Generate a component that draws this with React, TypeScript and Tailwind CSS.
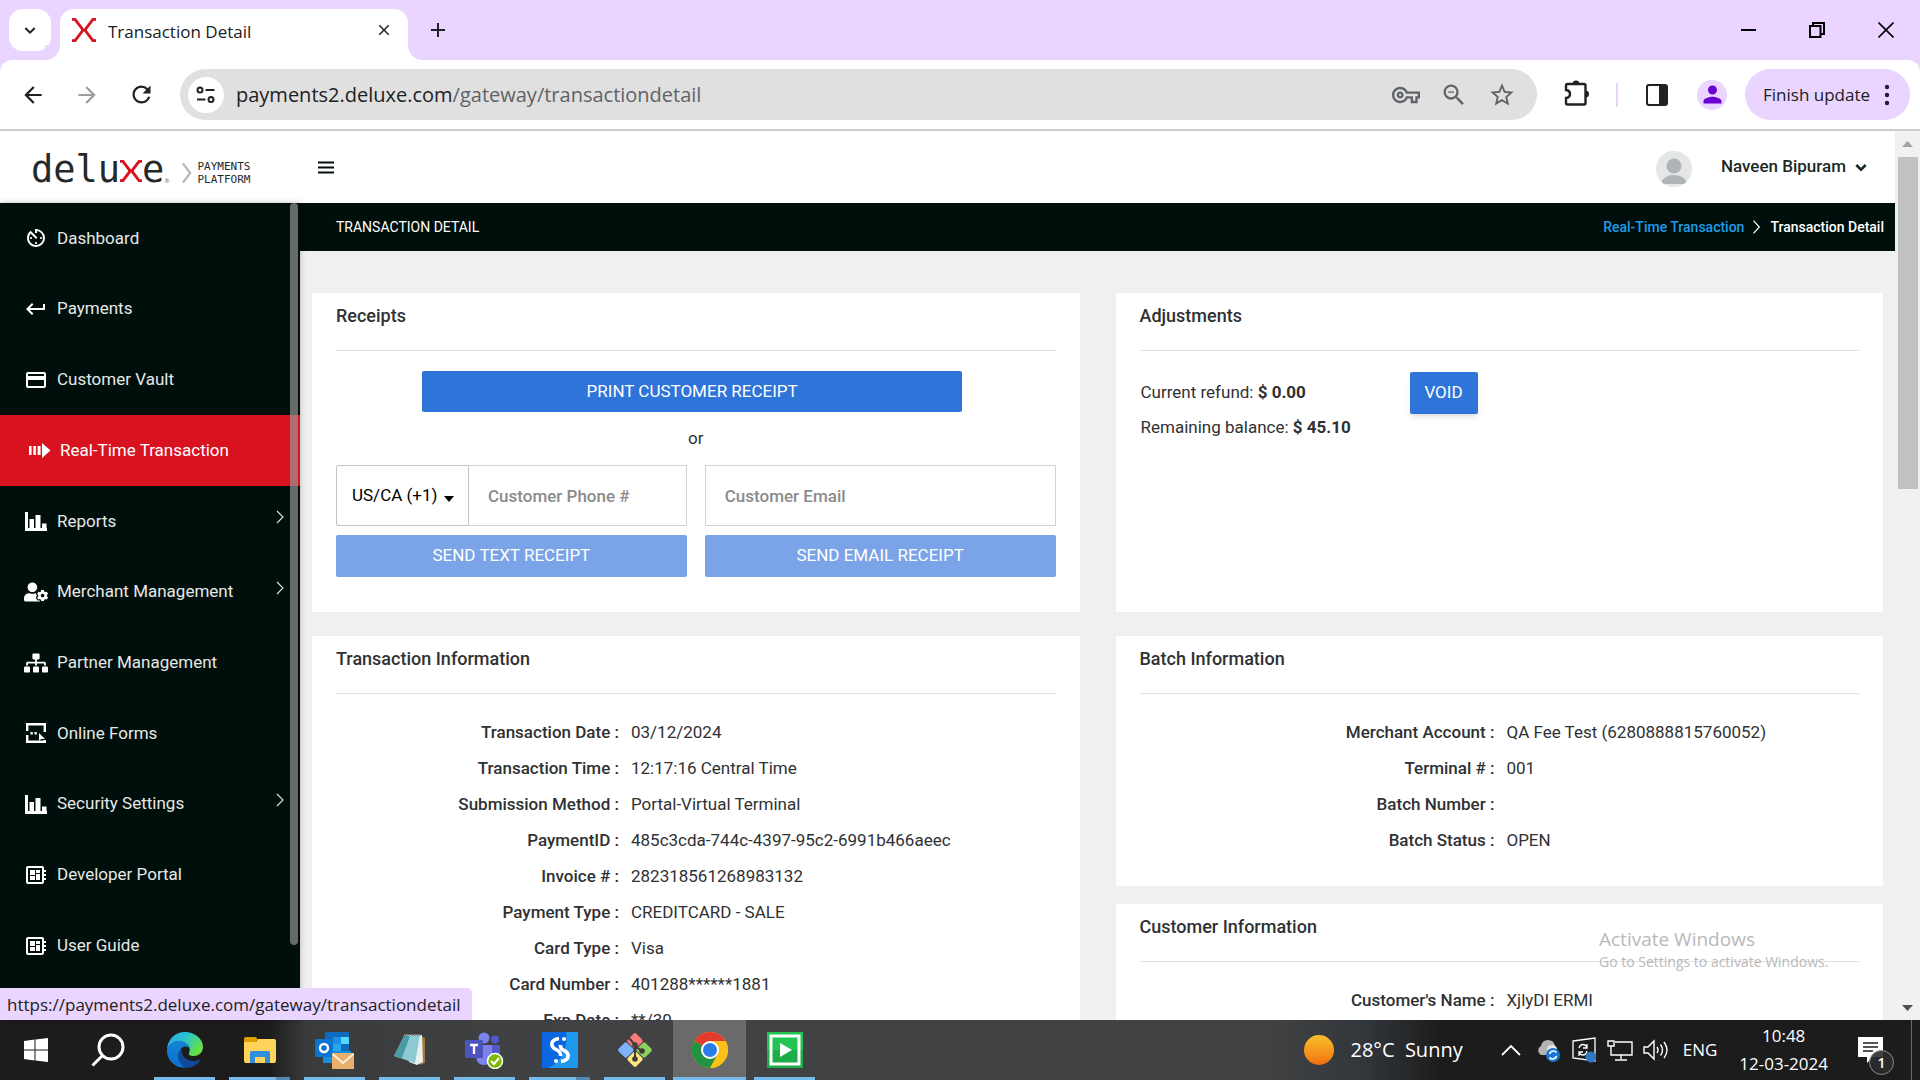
import React, { ReactNode } from "react";
import {
  MdArrowBack,
  MdArrowForward,
  MdAvTimer,
  MdClose,
  MdCreditCard,
  MdDeveloperBoard,
  MdKeyboardReturn,
  MdOutlineVpnKey,
  MdRefresh,
  MdStarBorder,
  MdZoomOut,
  MdAdd,
  MdPerson,
} from "react-icons/md";
import { FaSitemap, FaUserCog } from "react-icons/fa";

/* ---------- small drawings ---------- */

function DeluxeX({ className, width = 3 }: { className?: string; width?: number }) {
  return (
    <svg viewBox="0 0 24 24" className={className} fill="none" stroke="#d8121f" strokeWidth={width} aria-hidden="true">
      <path d="M0 1.300H3L10 10.500Q11 12 10 13.500L3 22.700H0" />
      <path d="M24 1.300H21L14 10.500Q13 12 14 13.500L21 22.700H24" />
      <path d="M10.500 12H13.500" />
    </svg>
  );
}

function Chevron({ className, d = "M5 9l7 7 7-7", width = 3 }: { className?: string; d?: string; width?: number }) {
  return (
    <svg viewBox="0 0 24 24" className={className} fill="none" stroke="currentColor" strokeWidth={width} aria-hidden="true">
      <path d={d} />
    </svg>
  );
}

function BarsIcon() {
  return (
    <svg viewBox="0 0 22 19" className="h-[19px] w-[22px]" fill="currentColor" aria-hidden="true">
      <path d="M0 0h3v16h19v3H0z" />
      <path d="M4.500 7h4.500v9.500H4.500zM10.500 3h5v13.500h-5zM17 11.500h4.500v5H17z" />
    </svg>
  );
}

function RealTimeIcon() {
  return (
    <svg viewBox="0 0 22 15" className="h-[15px] w-[22px]" fill="currentColor" aria-hidden="true">
      <path d="M0 3h2.600v9H0zM4.300 3h2.600v9H4.300zM8.600 3h3v9h-3zM13 0l8.500 7.500L13 15z" />
    </svg>
  );
}

function FormsIcon() {
  return (
    <svg viewBox="0 0 22 22" className="h-[22px] w-[22px]" fill="none" stroke="currentColor" strokeWidth="2.400" aria-hidden="true">
      <path d="M2.200 9V2.200H19.800V10M2.200 13V19.800H19.800V18" />
      <path d="M5.500 11.200h2.300M9.500 11.200h2.300" />
      <path d="M14 11v8l2-2h4z" fill="currentColor" stroke="none" />
    </svg>
  );
}

function TuneIcon() {
  return (
    <svg viewBox="0 0 20 18" className="h-[18px] w-5" fill="none" stroke="#202124" strokeWidth="2" aria-hidden="true">
      <circle cx="4" cy="4" r="2.500" />
      <circle cx="15" cy="13.500" r="2.500" />
      <path d="M9.500 4H18.500M1 13.500H9.500" />
    </svg>
  );
}

function PuzzleIcon() {
  return (
    <svg viewBox="0 0 26 28" className="h-7 w-[26px]" aria-hidden="true">
      <path
        d="M2 6.500q0-1.500 1.500-1.500H20q1.500 0 1.500 1.500V24q0 1.500-1.500 1.500H3.500Q2 25.500 2 24v-5q4-.5 4-4t-4-4z"
        fill="none"
        stroke="#202124"
        strokeWidth="2.400"
      />
      <path d="M8.500 5a3.500 3.500 0 0 1 7 0zM21.500 11.500a3.500 3.500 0 0 1 0 7z" fill="#202124" />
    </svg>
  );
}

function Svg({ children, className = "h-9 w-9" }: { children: ReactNode; className?: string }) {
  return (
    <svg viewBox="0 0 36 36" className={className} aria-hidden="true">
      {children}
    </svg>
  );
}

const edge = (
  <Svg>
    <defs>
      <linearGradient id="edgeTop" x1="0" y1="0" x2="1" y2=".5">
        <stop offset="0" stopColor="#2aa7e4" />
        <stop offset=".5" stopColor="#2bc3d2" />
        <stop offset="1" stopColor="#67e043" />
      </linearGradient>
      <linearGradient id="edgeLow" x1="0" y1="0" x2="0" y2="1">
        <stop offset="0" stopColor="#1683d8" />
        <stop offset="1" stopColor="#0a6fcd" />
      </linearGradient>
    </defs>
    <path d="M0 17C1 7 8 0 18 0c10 0 18 7 18 15 0 6-5 9-9 9-4 0-6-1-5-3 2-4 0-8-5-10C10 9 3 11 0 17z" fill="url(#edgeTop)" />
    <path d="M0 17c2-6 8-9 14-8 5 1 9 4 9 8-2-3-6-3-8-1-6 5-4 14 3 20C7 36-1 27 0 17z" fill="url(#edgeLow)" />
    <path d="M15 15c-6 6-4 15 3 21 7 0 13-3 16-9-5 3-13 3-17-2-2-3-3-6-2-10z" fill="#11499c" />
  </Svg>
);

const folder = (
  <Svg>
    <path d="M2 7q0-2 2-2h10l2 3h-1l-1 2H2z" fill="#dfa000" />
    <path d="M2 10h12l2-3h16q2 0 2 2v20q0 2-2 2H4q-2 0-2-2z" fill="#ffd35a" />
    <path d="M8 31V21q0-2 2-2h16q2 0 2 2v10h-5v-6H13v6z" fill="#2f8fdc" />
  </Svg>
);

const outlook = (
  <svg viewBox="0 0 40 38" className="h-[38px] w-10" aria-hidden="true">
    <path d="M10 2q0-1 1-1h22q1 0 1 1v18H10z" fill="#0f6bbd" />
    <path d="M18 6h8v7h-8z" fill="#1f8fe0" />
    <path d="M26 6h8v7h-8z" fill="#50d9ff" />
    <path d="M18 13h8v7h-8z" fill="#28a8ea" />
    <path d="M8 20h28v12H8z" fill="#1490df" />
    <rect y="8" width="18" height="18" rx="1" fill="#0a74d1" />
    <circle cx="9" cy="17" r="4" fill="none" stroke="#fff" strokeWidth="2.400" />
    <path d="M17 22h22v16H17z" fill="#e8b06c" />
    <path d="M17.500 23l10.500 9 10.500-9" fill="none" stroke="#fff2dd" strokeWidth="1.800" />
  </svg>
);

const notepad = (
  <Svg>
    <path d="M29 4l4 2v25l-5 2z" fill="#a07a3f" />
    <path d="M14 3h16l1 27-6 3-8-3z" fill="#e9eeef" />
    <path d="M12 4l16-1-5 28-21-7z" fill="#8ccbd3" />
    <path d="M12 4l6 0-8 22-8-2z" fill="#4b9ba7" />
    <path d="M12 3h17" stroke="#888" strokeWidth="2" strokeDasharray="1.500 1" />
  </Svg>
);

const teams = (
  <svg viewBox="0 0 40 38" className="h-[38px] w-10" aria-hidden="true">
    <circle cx="19" cy="7" r="5.500" fill="#7b83eb" />
    <circle cx="30" cy="8.500" r="4" fill="#5059c9" />
    <path d="M25 14h10v11q0 5-6 5h-4z" fill="#5059c9" />
    <path d="M11 14h16v12q-1 8-8 8t-8-8z" fill="#7b83eb" />
    <rect y="9" width="18" height="18" rx="1" fill="#4b53bc" />
    <path d="M5 14h8M9 14v9" stroke="#fff" strokeWidth="2.300" />
    <circle cx="30" cy="30" r="7.500" fill="#7fba00" stroke="#fff" strokeWidth="1.500" />
    <path d="M26 30l3 3 5-6" stroke="#fff" strokeWidth="2" fill="none" />
  </svg>
);

const streamS = (
  <Svg>
    <path d="M0 0h36v36H0z" fill="#0b66e0" />
    <path d="M24 0h12v36H6C20 30 26 16 24 0z" fill="#1f97ee" />
    <path d="M17 6.500q-8 1-7 7 1 3 5 4.500 4 2 3.500 6" fill="none" stroke="#fff" strokeWidth="3.600" />
    <path d="M19 29.500q8-1 7-7-1-3-5-4.500-3-2-2.500-5" fill="none" stroke="#fff" strokeWidth="3.600" />
    <circle cx="22" cy="7" r="2" fill="#fff" />
    <circle cx="14" cy="29" r="2" fill="#fff" />
  </Svg>
);

const git = (
  <Svg>
    <g transform="rotate(45 18 18)">
      <rect x="5.500" y="5.500" width="12" height="12" rx="2" fill="#ff7b7b" />
      <rect x="18.500" y="5.500" width="12" height="12" rx="2" fill="#8bd05c" />
      <rect x="5.500" y="18.500" width="12" height="12" rx="2" fill="#80b3ff" />
      <rect x="18.500" y="18.500" width="12" height="12" rx="2" fill="#ffe680" />
    </g>
    <path d="M11 5l8 9M18 13v14M18 14l7 5" stroke="#403d3a" strokeWidth="2" fill="none" />
    <circle cx="18" cy="13" r="2.800" fill="#403d3a" />
    <circle cx="18" cy="27" r="2.800" fill="#403d3a" />
    <circle cx="25" cy="19" r="2.800" fill="#403d3a" />
  </Svg>
);

const chrome = (
  <Svg>
    <circle cx="18" cy="18" r="18" fill="#fbbc09" />
    <path d="M18 18L2.400 9A18 18 0 0 1 33.600 9z" fill="#e33b2e" />
    <path d="M2.400 9h31.200H18z" fill="#e33b2e" />
    <path d="M2.400 9A18 18 0 0 0 18 36l7.800-13.500L18 18z" fill="#229342" />
    <path d="M18 9h15.600A18 18 0 0 1 18 36l7.800-13.500z" fill="#fbc116" />
    <circle cx="18" cy="18" r="9" fill="#fff" />
    <circle cx="18" cy="18" r="7" fill="#2a7de9" />
  </Svg>
);

const recorder = (
  <Svg>
    <path d="M0 0h36v36H0z" fill="#23c552" />
    <path d="M0 18h36v18H0z" fill="#1cad49" />
    <rect x="4" y="4" width="28" height="28" fill="none" stroke="#fff" strokeWidth="3" />
    <path d="M13 11l12 7-12 7z" fill="#fff" />
  </Svg>
);

/* ---------- browser frame ---------- */

function TabStrip() {
  return (
    <div className="flex h-[60px] shrink-0 items-end bg-[#e9d5ff] text-[#202124]">
      <button aria-label="Search tabs" className="mb-[9px] ml-[9px] flex h-[42px] w-[42px] items-center justify-center rounded-[14px] bg-white">
        <Chevron className="h-4 w-4" width={3} />
      </button>
      <div className="relative ml-[9px] flex h-[51px] w-[348px] items-center rounded-t-[14px] bg-white pl-3 pr-[15px]">
        <div className="absolute -left-[15px] bottom-0 h-[15px] w-[15px] bg-[radial-gradient(circle_at_0_0,#e9d5ff_15px,white_15px)]" />
        <div className="absolute -right-[15px] bottom-0 h-[15px] w-[15px] bg-[radial-gradient(circle_at_100%_0,#e9d5ff_15px,white_15px)]" />
        <DeluxeX className="mb-[9px] h-6 w-6" width={2.8} />
        <span className="mb-[6px] ml-3 grow text-[17px]">Transaction Detail</span>
        <button aria-label="Close tab" className="mb-[9px]">
          <MdClose className="h-[18px] w-[18px]" />
        </button>
      </div>
      <button aria-label="New tab" className="mb-[18px] ml-[18px] flex h-6 w-6 items-center justify-center">
        <MdAdd className="h-6 w-6" />
      </button>
      <div className="mb-[22px] ml-auto mr-[26px] flex items-center gap-[53px] text-black">
        <button aria-label="Minimize">
          <svg viewBox="0 0 16 16" className="h-4 w-4" stroke="currentColor" strokeWidth="2" aria-hidden="true">
            <path d="M1 8H16" />
          </svg>
        </button>
        <button aria-label="Restore">
          <svg viewBox="0 0 16 16" className="h-4 w-4" fill="none" stroke="currentColor" strokeWidth="2" aria-hidden="true">
            <path d="M1 4h10.500v11H1zM4 4V1h11v11h-3" />
          </svg>
        </button>
        <button aria-label="Close">
          <svg viewBox="0 0 16 16" className="h-4 w-4" stroke="currentColor" strokeWidth="1.600" aria-hidden="true">
            <path d="M.5.5l15 15M15.500.5l-15 15" />
          </svg>
        </button>
      </div>
    </div>
  );
}

function Toolbar() {
  return (
    <div className="shrink-0 bg-[#e9d5ff]">
      <div className="flex h-[71px] items-center rounded-t-[12px] border-b-2 border-[#cccccc] bg-white pl-5 pr-[10px] text-[#202124]">
        <div className="flex gap-7">
          <button aria-label="Back">
            <MdArrowBack className="h-[26px] w-[26px]" />
          </button>
          <button aria-label="Forward" className="text-[#9e9e9e]">
            <MdArrowForward className="h-[26px] w-[26px]" />
          </button>
          <button aria-label="Reload">
            <MdRefresh className="h-[27px] w-[27px]" />
          </button>
        </div>
        <div className="ml-[25px] flex h-[51px] grow items-center rounded-full bg-[#e0e0e0] pl-2 pr-[21px]">
          <button aria-label="Site information" className="flex h-9 w-9 items-center justify-center rounded-full bg-white">
            <TuneIcon />
          </button>
          <p className="ml-3 grow text-xl text-[#5f6368]">
            <span className="text-[#202124]">payments2.deluxe.com</span>/gateway/transactiondetail
          </p>
          <div className="flex items-center gap-5 text-[#5f6368]">
            <button aria-label="Passwords">
              <MdOutlineVpnKey className="h-7 w-7" />
            </button>
            <button aria-label="Zoom">
              <MdZoomOut className="h-7 w-7" />
            </button>
            <button aria-label="Bookmark">
              <MdStarBorder className="h-7 w-7" />
            </button>
          </div>
        </div>
        <button aria-label="Extensions" className="mb-1 ml-[27px]">
          <PuzzleIcon />
        </button>
        <span className="ml-[26px] h-6 w-[2px] bg-[#e9d5ff]" />
        <button aria-label="Side panel" className="ml-7">
          <svg viewBox="0 0 22 22" className="h-[22px] w-[22px]" aria-hidden="true">
            <rect x="1" y="1" width="20" height="20" rx="2" fill="none" stroke="#202124" strokeWidth="2" />
            <path d="M13 1h8v20h-8z" fill="#202124" />
          </svg>
        </button>
        <button aria-label="Profile" className="ml-[29px] flex h-[30px] w-[30px] items-center justify-center rounded-full bg-[#e9d5ff] text-[#6a00d4]">
          <MdPerson className="h-[27px] w-[27px]" />
        </button>
        <button className="ml-[18px] flex h-[51px] w-[165px] items-center justify-between rounded-full bg-[#e9d5ff] pl-[18px] pr-5 text-[17px]">
          <span className="whitespace-nowrap">Finish update</span>
          <svg viewBox="0 0 6 22" className="h-[22px] w-[6px]" fill="currentColor" aria-hidden="true">
            <circle cx="3" cy="3" r="2.200" />
            <circle cx="3" cy="11" r="2.200" />
            <circle cx="3" cy="19" r="2.200" />
          </svg>
        </button>
      </div>
    </div>
  );
}

/* ---------- application ---------- */

function AppHeader() {
  return (
    <header className="flex h-[72px] shrink-0 items-center bg-white">
      <a href="#home" aria-label="Deluxe payments platform" className="ml-[31px] mt-[6px] flex items-end text-[#25282a]">
        <span className="flex items-baseline font-['DejaVu_Sans_Mono',monospace] text-[37px] leading-10">
          delu
          <DeluxeX className="h-[22px] w-[22px]" width={3.2} />e
        </span>
        <span className="mb-1 text-[6px] text-gray-500">®</span>
        <svg viewBox="0 0 12 24" className="mb-[6px] ml-3 h-[22px] w-3" fill="none" stroke="#b8b8b8" strokeWidth="2.500" aria-hidden="true">
          <path d="M1.500 1.500L9.500 12 1.500 22.500" />
        </svg>
        <span className="mb-1 ml-1 font-['DejaVu_Sans_Mono',monospace] text-[11px] leading-[13px]">
          PAYMENTS
          <br />
          PLATFORM
        </span>
      </a>
      <button aria-label="Toggle menu" className="ml-[68px]">
        <svg viewBox="0 0 16 13" className="h-[13px] w-4" stroke="#000f0b" strokeWidth="2.200" aria-hidden="true">
          <path d="M0 1.500H16M0 6.500H16M0 11.500H16" />
        </svg>
      </button>
      <button className="ml-auto mr-[26px] flex items-center font-['Roboto',sans-serif] text-[17px] font-medium text-[#1b2a26]">
        <svg viewBox="0 0 36 36" className="mr-[29px] mt-[3px] h-9 w-9" aria-hidden="true">
          <clipPath id="avatarClip">
            <circle cx="18" cy="18" r="18" />
          </clipPath>
          <g clipPath="url(#avatarClip)">
            <path d="M0 0h36v36H0z" fill="#e4e6e7" />
            <circle cx="18" cy="15" r="7.500" fill="#aeb4b7" />
            <path d="M5 33q2-9 13-9t13 9z" fill="#aeb4b7" />
          </g>
        </svg>
        Naveen Bipuram
        <Chevron className="ml-[7px] h-4 w-4" width={4} />
      </button>
    </header>
  );
}

type NavItem = { label: string; icon: ReactNode; active?: boolean; more?: boolean };

const navItems: NavItem[] = [
  { label: "Dashboard", icon: <MdAvTimer className="h-6 w-6" /> },
  { label: "Payments", icon: <MdKeyboardReturn className="h-6 w-6" /> },
  { label: "Customer Vault", icon: <MdCreditCard className="h-6 w-6" /> },
  { label: "Real-Time Transaction", icon: <RealTimeIcon />, active: true },
  { label: "Reports", icon: <BarsIcon />, more: true },
  { label: "Merchant Management", icon: <FaUserCog className="h-6 w-6" />, more: true },
  { label: "Partner Management", icon: <FaSitemap className="h-6 w-6" /> },
  { label: "Online Forms", icon: <FormsIcon /> },
  { label: "Security Settings", icon: <BarsIcon />, more: true },
  { label: "Developer Portal", icon: <MdDeveloperBoard className="h-6 w-6" /> },
  { label: "User Guide", icon: <MdDeveloperBoard className="h-6 w-6" /> },
];

function Sidebar() {
  return (
    <nav className="relative w-[300px] shrink-0 overflow-hidden bg-[#000f0b] font-['Roboto',sans-serif] text-[17px] text-[#e6e8e7] shadow-[0_0_6px_rgba(0,0,0,0.25)]">
      <div className="grid h-[778px] auto-rows-fr">
        {navItems.map((item) => (
          <a
            key={item.label}
            href="#nav"
            className={item.active ? "flex items-center bg-[#d8121f] pl-7 text-white" : "flex items-center pl-6"}
          >
            <span className="flex w-6 justify-center text-white">{item.icon}</span>
            <span className={item.active ? "ml-2 grow" : "ml-[9px] grow"}>{item.label}</span>
            {item.more && <Chevron className="mb-2 mr-[11px] h-4 w-4" d="M6 3l9 9-9 9" width={1.6} />}
          </a>
        ))}
      </div>
      <div className="absolute right-[2px] top-0 h-[742px] w-2 rounded-full bg-[#9b9c9c]/65" />
    </nav>
  );
}

function Card({ title, children }: { title: string; children: ReactNode }) {
  return (
    <section className="bg-white px-6">
      <h2 className="border-b border-[#e2e2e2] pb-[22px] pt-[11px] text-lg font-medium leading-6">{title}</h2>
      {children}
    </section>
  );
}

function Details({ rows, labelClass }: { rows: [string, string][]; labelClass: string }) {
  return (
    <dl className="pb-7 pt-5 leading-9">
      {rows.map(([label, value]) => (
        <div key={label} className="flex h-9">
          <dt className={`${labelClass} shrink-0 pr-3 text-right font-medium`}>{label} :</dt>
          <dd>{value}</dd>
        </div>
      ))}
    </dl>
  );
}

const transactionRows: [string, string][] = [
  ["Transaction Date", "03/12/2024"],
  ["Transaction Time", "12:17:16 Central Time"],
  ["Submission Method", "Portal-Virtual Terminal"],
  ["PaymentID", "485c3cda-744c-4397-95c2-6991b466aeec"],
  ["Invoice #", "282318561268983132"],
  ["Payment Type", "CREDITCARD - SALE"],
  ["Card Type", "Visa"],
  ["Card Number", "401288******1881"],
  ["Exp Date", "**/30"],
];

const batchRows: [string, string][] = [
  ["Merchant Account", "QA Fee Test (6280888815760052)"],
  ["Terminal #", "001"],
  ["Batch Number", ""],
  ["Batch Status", "OPEN"],
];

const customerRows: [string, string][] = [["Customer's Name", "XjlyDI ERMI"]];

function Receipts() {
  return (
    <Card title="Receipts">
      <form className="pb-[35px] pt-5" onSubmit={(e) => e.preventDefault()}>
        <button type="button" className="ml-[12%] block h-[41px] w-3/4 rounded-[2px] bg-[#2f74d8] text-white">
          PRINT CUSTOMER RECEIPT
        </button>
        <p className="flex h-[53px] items-center justify-center">or</p>
        <div className="grid grid-cols-2 gap-x-[18px] gap-y-[9px]">
          <div className="flex h-[61px]">
            <div className="relative w-[133px] shrink-0">
              <select aria-label="Country code" className="h-full w-full appearance-none rounded-l-[2px] border border-[#c4c4c4] bg-white pl-[15px] text-black">
                <option>US/CA (+1)</option>
              </select>
              <svg viewBox="0 0 10 6" className="pointer-events-none absolute right-[15px] top-[31px] h-[6px] w-[10px]" aria-hidden="true">
                <path d="M0 0h10L5 6z" />
              </svg>
            </div>
            <input aria-label="Customer phone" placeholder="Customer Phone #" className="h-full w-full min-w-0 border border-l-0 border-[#d2d2d2] pl-[19px] font-medium placeholder:text-[#8b8b8b]" />
          </div>
          <input aria-label="Customer email" placeholder="Customer Email" className="h-full w-full min-w-0 border border-[#d2d2d2] pl-[19px] font-medium placeholder:text-[#8b8b8b]" />
          <button type="button" disabled className="h-[42px] rounded-[2px] bg-[#7aa4e7] text-white">
            SEND TEXT RECEIPT
          </button>
          <button type="button" disabled className="h-[42px] rounded-[2px] bg-[#7aa4e7] text-white">
            SEND EMAIL RECEIPT
          </button>
        </div>
      </form>
    </Card>
  );
}

function Adjustments() {
  return (
    <Card title="Adjustments">
      <div className="flex items-start pt-[21px]">
        <div className="w-[270px] pl-px pt-[3px] leading-[35px]">
          <p>
            Current refund: <b>$ 0.00</b>
          </p>
          <p>
            Remaining balance: <b>$ 45.10</b>
          </p>
        </div>
        <button className="h-[42px] w-[68px] rounded-[2px] bg-[#2f74d8] text-white shadow-md">VOID</button>
      </div>
    </Card>
  );
}

function Content() {
  return (
    <main className="flex min-w-0 grow flex-col overflow-hidden bg-[#f0f0f0] font-['Roboto',sans-serif] text-[17px] text-[#2f3133]">
      <div className="flex h-12 shrink-0 items-center justify-between bg-[#000f0b] pl-9 pr-[11px] text-sm text-white">
        <h1>TRANSACTION DETAIL</h1>
        <div className="flex items-center font-medium">
          <a href="#realtime" className="text-[#1e9be9]">
            Real-Time Transaction
          </a>
          <Chevron className="mx-[6px] h-[14px] w-[14px]" d="M6 1l10 11L6 23" width={2} />
          <span>Transaction Detail</span>
        </div>
      </div>
      <div className="grid grid-cols-2 gap-x-9 gap-y-6 px-3 pt-[42px]">
        <Receipts />
        <Adjustments />
        <Card title="Transaction Information">
          <Details rows={transactionRows} labelClass="w-[41%]" />
        </Card>
        <div className="flex flex-col gap-[18px]">
          <Card title="Batch Information">
            <Details rows={batchRows} labelClass="w-[51%]" />
          </Card>
          <Card title="Customer Information">
            <Details rows={customerRows} labelClass="w-[51%]" />
          </Card>
        </div>
      </div>
    </main>
  );
}

function PageScrollbar() {
  return (
    <div className="flex w-[25px] shrink-0 flex-col items-center bg-[#f1f1f1]">
      <svg viewBox="0 0 11 6" className="my-[10px] h-[6px] w-[11px] shrink-0" fill="#a3a3a3" aria-hidden="true">
        <path d="M0 6L5.500 0 11 6z" />
      </svg>
      <div className="h-[332px] w-5 bg-[#c1c1c1]" />
      <svg viewBox="0 0 11 6" className="mb-[9px] mt-auto h-[6px] w-[11px]" fill="#505050" aria-hidden="true">
        <path d="M0 0L5.500 6 11 0z" />
      </svg>
    </div>
  );
}

/* ---------- taskbar ---------- */

type Task = { name: string; icon: ReactNode; active?: boolean; stacked?: boolean };

const tasks: Task[] = [
  { name: "Edge", icon: edge },
  { name: "File Explorer", icon: folder, stacked: true },
  { name: "Outlook", icon: outlook },
  { name: "Notepad", icon: notepad },
  { name: "Teams", icon: teams },
  { name: "Stream", icon: streamS, stacked: true },
  { name: "Git", icon: git },
  { name: "Chrome", icon: chrome, active: true },
  { name: "Recorder", icon: recorder },
];

function Taskbar() {
  return (
    <footer className="flex h-[60px] shrink-0 bg-[linear-gradient(90deg,#1c1c1c_0,#1c1c1c_14%,#3a3b3c_16%,#414243_30%,#414243_66%,#32373c_71%,#1c1c1c_75%)] text-white">
      <button aria-label="Start" className="flex w-[72px] items-center justify-center">
        <svg viewBox="0 0 24 24" className="h-6 w-6" fill="#fff" aria-hidden="true">
          <path d="M0 3l10.500-1.500v10H0zM11.500 1.400L24 0v11.500H11.500zM0 12.500h10.500v10L0 21zM11.500 12.500H24V24l-12.500-1.500z" />
        </svg>
      </button>
      <button aria-label="Search" className="mr-[3px] flex w-[72px] items-center justify-center">
        <svg viewBox="0 0 34 34" className="h-[34px] w-[34px]" fill="none" stroke="#fff" strokeWidth="3" aria-hidden="true">
          <circle cx="20" cy="14" r="12" />
          <path d="M11.500 22.500L1.500 32.500" />
        </svg>
      </button>
      {tasks.map((t) => (
        <button key={t.name} aria-label={t.name} className="flex w-[75px] flex-col items-center px-px">
          <span className={t.active ? "flex w-full grow items-center justify-center bg-[#6a6a6a] pt-[3px]" : "flex w-full grow items-center justify-center pt-[3px]"}>
            {t.icon}
          </span>
          <span className={t.active ? "h-[3px] w-full bg-[#76b9ed]" : "flex h-[3px] w-[61px] bg-[#76b9ed]"}>
            {t.stacked && <span className="ml-auto h-[3px] w-[14px] bg-[#5588b0]" />}
          </span>
        </button>
      ))}
      <div className="ml-auto flex items-center pr-2">
        <span className="h-[30px] w-[30px] rounded-full bg-linear-to-b from-[#f8bf2a] to-[#f0700f]" />
        <span className="ml-4 whitespace-pre text-xl">28°C  Sunny</span>
        <Chevron className="ml-9 h-6 w-6" d="M3 17l9-9 9 9" width={1.8} />
        <svg viewBox="0 0 26 24" className="ml-3 h-6 w-[26px]" aria-hidden="true">
          <path d="M6 17a5 5 0 0 1 0-9q1-6 7-6t7 6v9z" fill="#b4b4b4" />
          <path d="M12 12q0-5 5-5t5 5v5H12z" fill="#e6e6e6" />
          <circle cx="18" cy="17" r="7" fill="#1976d2" />
          <path d="M14.500 16q1-3 4-3 2 0 3 1.500M21.500 18q-1 3-4 3-2 0-3-1.500" stroke="#fff" strokeWidth="1.600" fill="none" />
        </svg>
        <svg viewBox="0 0 24 26" className="ml-[11px] h-[26px] w-6" fill="none" stroke="#fff" strokeWidth="1.300" aria-hidden="true">
          <path d="M1 4L23 1v23L1 21z" />
          <path d="M7 11q1-3.500 4-3.500t4 3.500M15 7v4h-4M15 14q-1 4-4 4t-4-3M7 19v-4h4" />
          <circle cx="19" cy="20" r="5.500" fill="#2f78c4" stroke="none" />
        </svg>
        <svg viewBox="0 0 26 24" className="ml-[11px] h-6 w-[26px]" fill="none" stroke="#fff" strokeWidth="1.400" aria-hidden="true">
          <path d="M8 4h17v13H4v-6M14 17v4M8 22h12M1 3h6v5H1zM4 8v4" />
        </svg>
        <svg viewBox="0 0 26 24" className="ml-[10px] h-6 w-[26px]" fill="none" stroke="#fff" strokeWidth="1.400" aria-hidden="true">
          <path d="M1 9h4l6-6v18l-6-6H1zM14 9q2 3 0 6M17.500 6.500q4 5.500 0 11M21 4q6 8 0 16" />
        </svg>
        <span className="ml-[14px] text-[17px]">ENG</span>
        <div className="ml-[22px] text-center text-[17px] leading-7">
          <div>10:48</div>
          <div>12-03-2024</div>
        </div>
        <button aria-label="Notifications" className="relative ml-[30px]">
          <svg viewBox="0 0 26 26" className="h-[26px] w-[26px]" aria-hidden="true">
            <path d="M0 0h25v20H15l-6 6v-6H0z" fill="#fff" />
            <path d="M5 6h15M5 10h15M5 14h10" stroke="#1c1c1c" strokeWidth="1.400" />
          </svg>
          <span className="absolute -bottom-3 -right-[10px] flex h-[25px] w-[25px] items-center justify-center rounded-full border border-[#8a8a8a] bg-[#2c2c2c]/90 text-sm font-semibold">1</span>
        </button>
        <span className="ml-[27px] h-[60px] w-px bg-[#6b6b6b]" />
      </div>
    </footer>
  );
}

export default function App() {
  return (
    <div className="flex h-screen flex-col overflow-hidden bg-white font-['Open_Sans',sans-serif]">
      <TabStrip />
      <Toolbar />
      <div className="relative flex min-h-0 grow">
        <div className="flex min-w-0 grow flex-col">
          <AppHeader />
          <div className="flex min-h-0 grow">
            <Sidebar />
            <Content />
          </div>
        </div>
        <PageScrollbar />
        <div className="absolute bottom-0 left-0 flex h-8 items-center rounded-tr-[5px] bg-[#e9d5ff] pl-[7px] pr-[11px] pt-px text-[17px] text-[#202124]">
          https://payments2.deluxe.com/gateway/transactiondetail
        </div>
        <div className="pointer-events-none absolute bottom-[47px] right-[84px] w-[237px] whitespace-nowrap text-[#b9b9b9]">
          <p className="text-[19px] leading-6">Activate Windows</p>
          <p className="text-sm leading-[22px]">Go to Settings to activate Windows.</p>
        </div>
      </div>
      <Taskbar />
    </div>
  );
}
